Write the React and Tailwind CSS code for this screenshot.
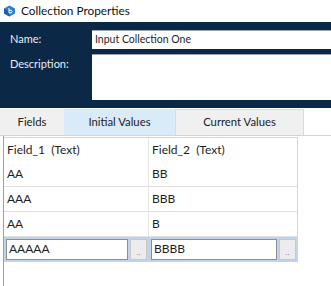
import React from 'react'

const rows = [
  ['AA', 'BB'],
  ['AAA', 'BBB'],
  ['AA', 'B'],
]

function CellEditor({ value }) {
  return (
    <div className="flex h-full items-center gap-[2px] px-[2px]">
      <div className="flex h-[21px] flex-1 items-center border border-[#8f8f8f] bg-white pl-[2px] text-[12px] text-[#1e1e1e]">
        {value}
      </div>
      <div className="flex h-[21px] w-[17px] items-end justify-center border border-[#c8c8c8] bg-[#ececec] pb-[3px] text-[8px] leading-none text-[#a070c0]">
        ..
      </div>
    </div>
  )
}

export default function App() {
  return (
    <div
      className="h-[286px] w-[331px] overflow-hidden bg-white text-[#222]"
      style={{ fontFamily: 'Lato, "Noto Sans", sans-serif' }}
    >
      <div className="flex h-[22px] items-center gap-[5px] pl-[3px]">
        <svg width="13" height="12" viewBox="0 0 13 12">
          <path d="M6.5 0.5 L12 3.5 L12 8.5 L6.5 11.5 L1 8.5 L1 3.5 Z" fill="#2d7fd0" />
          <path d="M1 3.5 L6.5 6.5 L6.5 11.5 L1 8.5 Z" fill="#1c5fa8" />
          <path d="M6 3 L6 8 M6 5.5 Q9 4.5 9 6.5 Q9 8.5 6 8" stroke="#fff" strokeWidth="1" fill="none" />
        </svg>
        <span className="text-[11.8px] text-[#111]">Collection Properties</span>
      </div>

      <div className="h-[86px] bg-[#0b2947] pt-[8px]">
        <div className="flex items-center">
          <span className="w-[92px] pl-[10px] text-[11px] text-[#e8edf2]">Name:</span>
          <div className="flex h-[19px] flex-1 items-center border-t border-[#9aa4ae] bg-white pl-[3px] text-[10.5px] text-[#1e1e1e]">
            Input Collection One
          </div>
        </div>
        <div className="mt-[5px] flex items-start">
          <span className="w-[92px] pl-[10px] pt-[2px] text-[11px] text-[#e8edf2]">Description:</span>
          <div className="h-[46px] flex-1 border-t border-[#9aa4ae] bg-white" />
        </div>
      </div>

      <div className="flex h-[28px] items-end border-b border-[#d4d4d4] pt-[2px] text-[11.3px]">
        <div className="flex h-[26px] w-[64px] items-center justify-center bg-[#f0f0f0] text-[#222]">Fields</div>
        <div className="flex h-[26px] w-[111px] items-center justify-center bg-[#d9eaf8] text-[#222]">Initial Values</div>
        <div className="flex h-[26px] w-[129px] items-center justify-center border border-b-0 border-[#dadada] bg-[#f0f0f0] text-[#222]">
          Current Values
        </div>
      </div>

      <div className="ml-[3px] h-[150px] border-l border-[#a0a0a0] pt-[1px]">
        <div className="w-[294px] border-r border-[#d4d4d4] text-[12px] text-[#1e1e1e]">
          <div className="grid h-[25px] grid-cols-[145px_149px] border-t border-[#d4d4d4]">
            <div className="flex items-center border-r border-[#e6e6e6] pl-[3px]">Field_1&nbsp; (Text)</div>
            <div className="flex items-center pl-[3px]">Field_2&nbsp; (Text)</div>
          </div>
          {rows.map((r, i) => (
            <div key={i} className="grid h-[25px] grid-cols-[145px_149px] border-b border-[#e0e0e0]">
              <div className="flex items-center border-r border-[#e6e6e6] pl-[3px]">{r[0]}</div>
              <div className="flex items-center pl-[3px]">{r[1]}</div>
            </div>
          ))}
          <div className="grid h-[25px] grid-cols-[145px_149px] border-b border-[#c8d0dc] bg-[#bfd3ec]">
            <CellEditor value="AAAAA" />
            <CellEditor value="BBBB" />
          </div>
        </div>
      </div>
    </div>
  )
}
